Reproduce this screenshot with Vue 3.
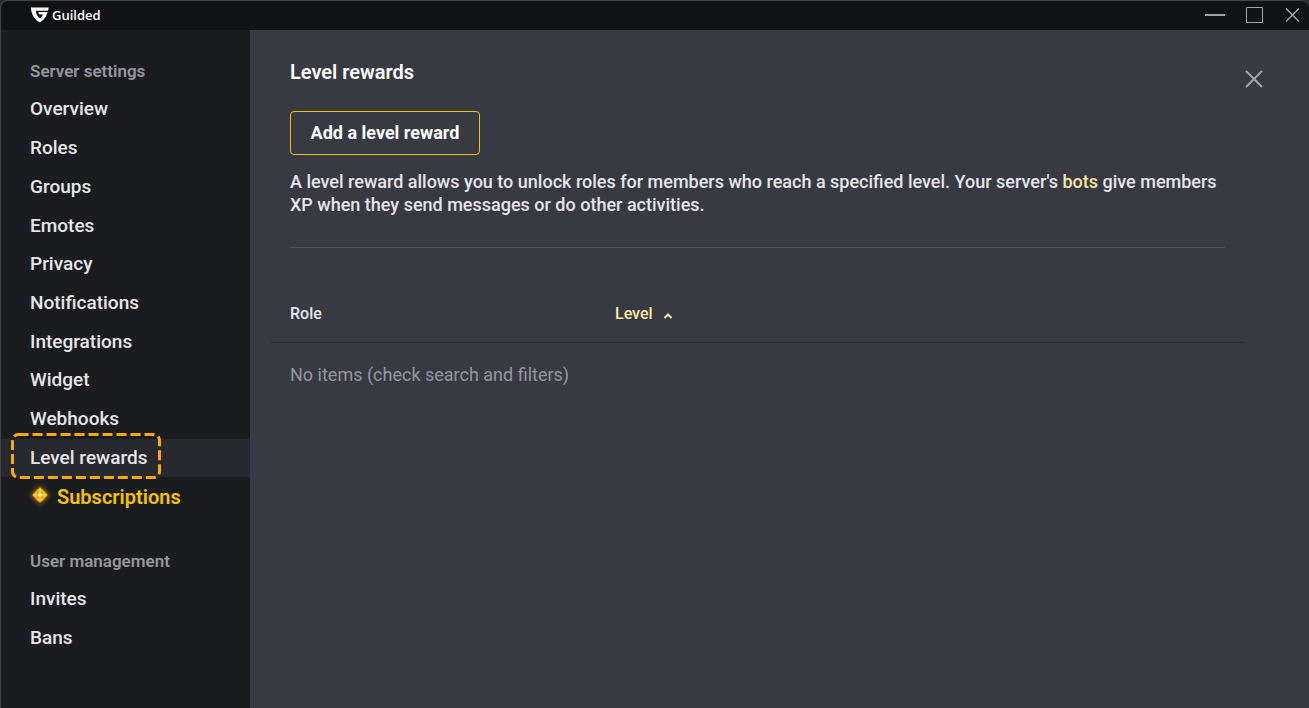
<script setup>
import { ref } from 'vue'

const groups = [
  {
    title: 'Server settings',
    kind: 'server',
    items: [
      'Overview',
      'Roles',
      'Groups',
      'Emotes',
      'Privacy',
      'Notifications',
      'Integrations',
      'Widget',
      'Webhooks',
      'Level rewards',
      'Subscriptions',
    ],
  },
  { title: 'User management', kind: 'users', items: ['Invites', 'Bans'] },
]
const active = ref('Level rewards')
</script>

<template>
  <div class="window">
    <header class="titlebar">
      <div class="brand">
        <svg class="shield" viewBox="0 0 18 16" aria-hidden="true">
          <path
            fill="#fff"
            d="M0 0.5H17.6C17.5 2 17.3 3 17 3.8H4.8C5 6.8 6.2 9.3 8.9 11.3C10.6 10 11.6 8.7 12.1 7.6H8.6C7.9 6.8 7.4 5.9 7.2 5.1H16.6C15.7 9.4 13.2 13 8.9 15.4C3 12.3 0.2 7 0 0.5Z"
          />
        </svg>
        <span class="brand-name">Guilded</span>
      </div>
      <div class="controls">
        <button type="button" aria-label="Minimize">
          <svg width="20" height="20" viewBox="0 0 20 20"><path d="M0 10H20" stroke-width="2" /></svg>
        </button>
        <button type="button" aria-label="Maximize">
          <svg width="18" height="18" viewBox="0 0 18 18"><path d="M1.5 1.5H17.5V16.5H1.5Z" /></svg>
        </button>
        <button type="button" aria-label="Close window">
          <svg width="17" height="16" viewBox="0 0 17 16"><path d="M3 1.5L16 14.5M16 1.5L3 14.5" stroke-width="1.5" /></svg>
        </button>
      </div>
    </header>

    <div class="body">
      <nav class="sidebar" aria-label="Settings">
        <section v-for="group in groups" :key="group.title" class="group" :class="group.kind">
          <h2>{{ group.title }}</h2>
          <ul>
            <li v-for="item in group.items" :key="item" :class="{ active: item === active }">
              <a href="#" :class="{ gold: item === 'Subscriptions' }" @click.prevent="active = item">
                <svg v-if="item === 'Subscriptions'" class="gem" viewBox="0 0 20 20" aria-hidden="true">
                  <path class="halo" d="M10 0L20 10L10 20L0 10Z" />
                  <path fill="#f0a90c" d="M10 2.2L13 4.8L15.2 7L17.8 10L15.2 13L13 15.2L10 17.8L7 15.2L4.8 13L2.2 10L4.8 7L7 4.8Z" />
                  <path fill="#f9cb3a" d="M10 3L12.4 5.6L10 8L7.6 5.6ZM10 12L12.4 14.4L10 17L7.6 14.4ZM3 10L5.6 7.6L8 10L5.6 12.4ZM12 10L14.4 7.6L17 10L14.4 12.4Z" />
                  <path fill="#fff0ad" d="M10 7.6L12.4 10L10 12.4L7.6 10Z" />
                </svg>
                <span>{{ item }}</span>
              </a>
              <svg v-if="item === active" class="marker" aria-hidden="true">
                <rect x="1.5" y="1.5" width="147" height="43" rx="6" />
              </svg>
            </li>
          </ul>
        </section>
      </nav>

      <main class="content">
        <div class="heading">
          <h1>Level rewards</h1>
          <button type="button" class="close" aria-label="Close settings">
            <svg width="18" height="18" viewBox="0 0 18 18"><path d="M1 1L17 17M17 1L1 17" /></svg>
          </button>
        </div>
        <button type="button" class="add">Add a level reward</button>
        <p class="intro">
          A level reward allows you to unlock roles for members who reach a specified level. Your server's
          <a href="#">bots</a> give members XP when they send messages or do other activities.
        </p>
        <hr />
        <table>
          <thead>
            <tr>
              <th scope="col">Role</th>
              <th scope="col" aria-sort="ascending">
                <button type="button" class="sort">
                  Level
                  <svg width="10" height="6" viewBox="0 0 10 6" aria-hidden="true"><path d="M1.5 5L5 1.5L8.5 5" /></svg>
                </button>
              </th>
            </tr>
          </thead>
          <tbody>
            <tr>
              <td colspan="2">No items (check search and filters)</td>
            </tr>
          </tbody>
        </table>
      </main>
    </div>
  </div>
</template>

<style>
body {
  background: #2b2d2f;
}
</style>

<style scoped>
.window {
  box-sizing: border-box;
  min-height: 100vh;
  display: flex;
  flex-direction: column;
  border: solid #414345;
  border-width: 1px 0 0 1px;
  border-radius: 8px 8px 0 0;
  overflow: hidden;
  background: #373943;
  font-family: Roboto, "Liberation Sans", sans-serif;
  color: #e6e6e9;
}
button {
  font: inherit;
  color: inherit;
  background: none;
  border: 0;
  padding: 0;
  cursor: pointer;
}
svg {
  display: block;
  flex: none;
}
a {
  text-decoration: none;
  color: inherit;
}
.titlebar {
  box-sizing: border-box;
  height: 29px;
  display: flex;
  align-items: center;
  justify-content: space-between;
  padding: 0 9px 2px 30px;
  background: #111213;
}
.brand {
  display: flex;
  align-items: center;
  gap: 3px;
}
.shield {
  width: 18px;
  height: 16px;
}
.brand-name {
  font: 600 13px/16px "Open Sans", sans-serif;
  color: #fff;
}
.controls {
  display: flex;
  align-items: center;
  gap: 20px;
}
.controls svg,
.close svg {
  fill: none;
  stroke: #a3a3ac;
}
.body {
  flex: 1;
  display: flex;
}
.sidebar {
  flex: none;
  width: 249px;
  background: #1b1c20;
}
.group h2 {
  margin: 0;
  padding: 31px 29px 9px;
  font-size: 17px;
  line-height: 20px;
  font-weight: 600;
  color: #96969e;
}
.group ul {
  margin: 0;
  padding: 0;
  list-style: none;
  display: grid;
  grid-auto-rows: 1fr;
}
.server ul {
  min-height: 426px;
}
.users h2 {
  padding-top: 35px;
}
.users ul {
  min-height: 77px;
}
li {
  position: relative;
  display: flex;
}
li a {
  flex: 1;
  display: flex;
  align-items: center;
  gap: 7px;
  padding: 0 29px;
  font-size: 19px;
  line-height: 24px;
  font-weight: 500;
}
li.active {
  background: #28292e;
}
li a.gold {
  color: #f5c400;
  font-size: 20px;
  font-weight: 600;
}
.gem {
  width: 20px;
  height: 20px;
  margin-bottom: 4px;
  overflow: visible;
}
.halo {
  fill: #c87f08;
  opacity: 0.6;
  filter: blur(2px);
}
.marker {
  position: absolute;
  left: 10px;
  top: -6px;
  width: 151px;
  height: 47px;
  fill: none;
  stroke: #fbab08;
  stroke-width: 3;
  stroke-dasharray: 10 4;
}
.content {
  flex: 1;
  padding: 30px 84px 30px 40px;
}
.heading {
  display: flex;
  justify-content: space-between;
  margin-right: -38px;
}
h1 {
  margin: 0;
  font-size: 20px;
  line-height: 24px;
  font-weight: 600;
  color: #fff;
}
.close {
  margin-top: 10px;
  height: 18px;
}
.close svg {
  stroke-width: 2;
}
.add {
  display: block;
  height: 44px;
  min-width: 190px;
  margin-top: 23px;
  padding: 0 18px 2px;
  border: 1px solid #f5c400;
  border-radius: 4px;
  font-size: 18px;
  font-weight: 700;
  color: #fff;
}
.intro {
  margin: 15px 0 0;
  font-size: 18px;
  line-height: 23px;
  font-weight: 500;
}
.intro a {
  color: #f8e7a4;
}
hr {
  margin: 31px 0 0;
  border: 0;
  border-top: 1px solid #4d4f5c;
}
table {
  width: calc(100% + 40px);
  margin: 36px -20px 0;
  border-collapse: collapse;
  table-layout: fixed;
  text-align: left;
}
th {
  height: 56px;
  padding: 2px 20px 0;
  border-bottom: 1px solid #2c2e36;
  font-size: 16px;
  line-height: 20px;
  font-weight: 500;
}
th:first-child {
  width: 285px;
}
.sort {
  display: flex;
  align-items: center;
  gap: 10px;
  color: #f8e7a4;
}
.sort svg {
  margin-top: 4px;
  fill: none;
  stroke: currentColor;
  stroke-width: 2;
}
td {
  padding: 20px;
  font-size: 18px;
  line-height: 24px;
  color: #96969e;
}
</style>
